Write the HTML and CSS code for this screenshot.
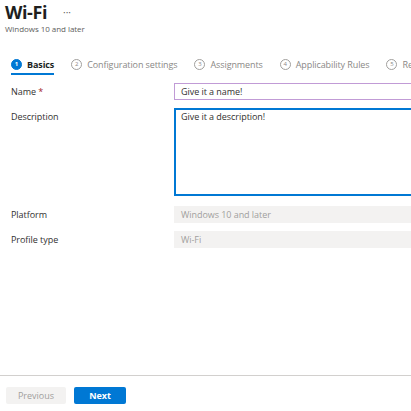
FILE: index.html
```html
<!DOCTYPE html>
<html>
<head>
<meta charset="utf-8">
<link rel="stylesheet" href="styles.css">
</head>
<body>
<div class="page">
  <header class="head">
    <div class="title-row"><h1 class="title">Wi-Fi</h1><span class="more">···</span></div>
    <div class="subtitle">Windows 10 and later</div>
  </header>
  <nav class="steps">
    <div class="step active"><span class="num">1</span><span class="label">Basics</span></div>
    <div class="step"><span class="num">2</span><span class="label">Configuration settings</span></div>
    <div class="step"><span class="num">3</span><span class="label">Assignments</span></div>
    <div class="step"><span class="num">4</span><span class="label">Applicability Rules</span></div>
    <div class="step"><span class="num">5</span><span class="label">Review + create</span></div>
  </nav>
  <form class="form">
    <div class="row">
      <label class="lbl">Name <span class="req">*</span></label>
      <div class="field input name">Give it a name!</div>
    </div>
    <div class="row">
      <label class="lbl">Description</label>
      <div class="field textarea">Give it a description!</div>
    </div>
    <div class="row platform">
      <label class="lbl">Platform</label>
      <div class="field disabled">Windows 10 and later</div>
    </div>
    <div class="row ptype">
      <label class="lbl">Profile type</label>
      <div class="field disabled">Wi-Fi</div>
    </div>
  </form>
  <div class="spacer"></div>
  <footer class="foot">
    <button class="btn prev" type="button">Previous</button>
    <button class="btn next" type="button">Next</button>
  </footer>
</div>
</body>
</html>
```
FILE: styles.css
```css
html, body { margin: 0; padding: 0; background: #fff; }
body { font-family: "Open Sans", "Noto Sans", sans-serif; color: #323130; overflow: hidden; }
.page { width: 411px; height: 411px; display: flex; flex-direction: column; overflow: hidden; }
.head { padding: 1px 0 0 5px; }
.title-row { display: flex; align-items: center; gap: 16px; height: 22px; }
.title { margin: 0; font-size: 18px; font-weight: 700; color: #201f1e; letter-spacing: -0.4px; line-height: 22px; }
.more { font-size: 10px; color: #605e5c; margin-top: -1px; }
.subtitle { font-size: 8px; line-height: 11px; color: #605e5c; letter-spacing: -0.05px; }
.steps { display: flex; padding: 21px 0 0 11px; white-space: nowrap; }
.step { display: flex; align-items: center; gap: 5px; margin-right: 17px; height: 18px; border-bottom: 2px solid transparent; color: #8a8886; font-size: 9px; letter-spacing: -0.1px; }
.step .num { box-sizing: border-box; width: 11px; height: 11px; border: 1px solid #a19f9d; border-radius: 50%; display: flex; align-items: center; justify-content: center; font-size: 6px; letter-spacing: 0; color: #8a8886; flex: none; }
.step.active { color: #201f1e; font-weight: 700; border-bottom-color: #0078d4; }
.step.active .num { background: #0078d4; border-color: #0078d4; color: #fff; font-weight: 700; }
.form { display: flex; flex-direction: column; gap: 8px; padding: 8px 0 0 11px; }
.row { display: grid; grid-template-columns: 163px 260px; align-items: start; }
.lbl { font-size: 9px; color: #323130; line-height: 17px; letter-spacing: -0.05px; }
.req { color: #a4262c; }
.field { box-sizing: border-box; font-size: 9px; padding: 0 6px; line-height: 15px; height: 17px; letter-spacing: -0.05px; }
.input.name { border: 1px solid #c19bd6; color: #323130; }
.textarea { height: 88px; border: 2px solid #0078d4; padding: 0 5px; line-height: 13px; color: #323130; }
.disabled { background: #f3f2f1; color: #a19f9d; border: 1px solid #f3f2f1; }
.platform { margin-top: 2px; }
.ptype { margin-top: 0px; }
.spacer { flex: 1; }
.foot { border-top: 1px solid #d2d0ce; display: flex; gap: 8px; padding: 11px 0 7px 6px; }
.btn { font-family: inherit; font-size: 9px; height: 17px; border-radius: 2px; padding: 0; border: none; }
.prev { width: 60px; background: #f3f2f1; color: #a19f9d; }
.next { width: 52px; background: #0078d4; color: #fff; font-weight: 700; }
```
